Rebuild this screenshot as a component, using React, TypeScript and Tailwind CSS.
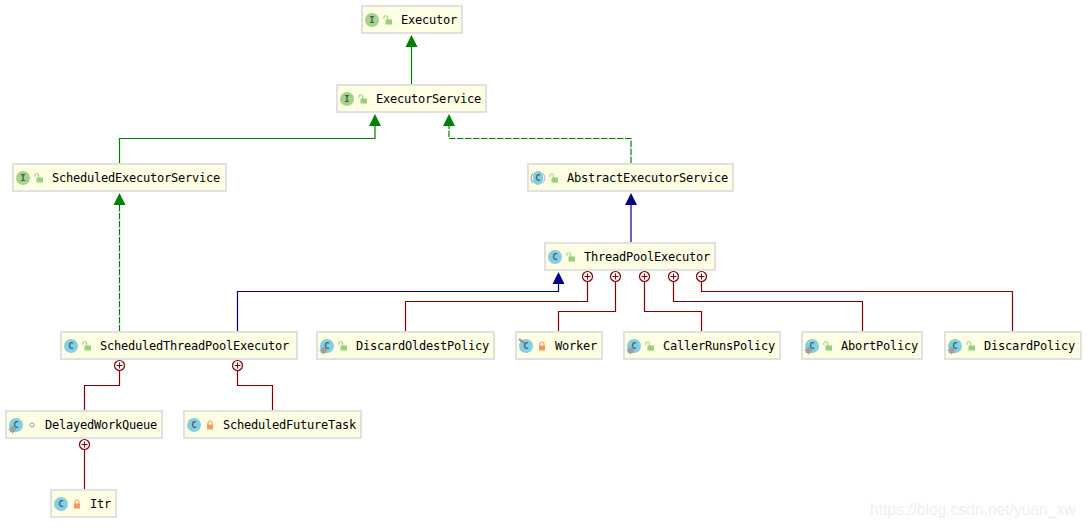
const GREEN = "#008000";
const NAVY = "#000080";
const RED = "#800000";

type Access = "open" | "closed" | "dot";
type NodeInfo = {
  name: string;
  box: string;
  kind: "I" | "C";
  access: Access;
  gear?: boolean;
  pin?: boolean;
  abstract?: boolean;
};

const nodes: NodeInfo[] = [
  { name: "Executor", box: "left-[361px] top-[5px] w-[102px]", kind: "I", access: "open" },
  { name: "ExecutorService", box: "left-[336px] top-[84px] w-[151px]", kind: "I", access: "open" },
  { name: "ScheduledExecutorService", box: "left-[12px] top-[163px] w-[215px]", kind: "I", access: "open" },
  { name: "AbstractExecutorService", box: "left-[527px] top-[163px] w-[207px]", kind: "C", access: "open", abstract: true },
  { name: "ThreadPoolExecutor", box: "left-[544px] top-[242px] w-[172px]", kind: "C", access: "open" },
  { name: "ScheduledThreadPoolExecutor", box: "left-[60px] top-[331px] w-[238px]", kind: "C", access: "open" },
  { name: "DiscardOldestPolicy", box: "left-[316px] top-[331px] w-[179px]", kind: "C", access: "open", gear: true },
  { name: "Worker", box: "left-[515px] top-[331px] w-[88px]", kind: "C", access: "closed", pin: true },
  { name: "CallerRunsPolicy", box: "left-[623px] top-[331px] w-[158px]", kind: "C", access: "open", gear: true },
  { name: "AbortPolicy", box: "left-[801px] top-[331px] w-[122px]", kind: "C", access: "open", gear: true },
  { name: "DiscardPolicy", box: "left-[944px] top-[331px] w-[138px]", kind: "C", access: "open", gear: true },
  { name: "DelayedWorkQueue", box: "left-[5px] top-[410px] w-[158px]", kind: "C", access: "dot", gear: true },
  { name: "ScheduledFutureTask", box: "left-[183px] top-[410px] w-[179px]", kind: "C", access: "closed" },
  { name: "Itr", box: "left-[50px] top-[489px] w-[67px]", kind: "C", access: "closed" },
];

const arrows: { x: number; y: number; c: string }[] = [
  { x: 411.5, y: 35, c: GREEN },
  { x: 375, y: 114, c: GREEN },
  { x: 449, y: 114, c: GREEN },
  { x: 119.5, y: 193, c: GREEN },
  { x: 631, y: 193, c: NAVY },
  { x: 558.5, y: 272, c: NAVY },
];

const lines: { d: string; c: string; dash?: string }[] = [
  { d: "M411.5 47V84", c: GREEN },
  { d: "M119.5 163V138.5H375V126", c: GREEN },
  { d: "M631 163V138.5H449V126", c: GREEN, dash: "6.5 1.5" },
  { d: "M119.5 205V331", c: GREEN, dash: "6.5 1.5" },
  { d: "M631 205V242", c: NAVY },
  { d: "M237.5 331V291.5H558.5V284", c: NAVY },
  { d: "M587.5 282V301.5H405.5V331", c: RED },
  { d: "M615.5 282V311.5H558.5V331", c: RED },
  { d: "M644.5 282V311.5H701.5V331", c: RED },
  { d: "M673.5 282V301.5H862.5V331", c: RED },
  { d: "M701.5 282V291.5H1012.5V331", c: RED },
  { d: "M119.5 371V385.5H84.5V410", c: RED },
  { d: "M237.5 371V385.5H272.5V410", c: RED },
  { d: "M84.5 450V489", c: RED },
];

const pluses: [number, number][] = [
  [587.5, 276.5], [615.5, 276.5], [644.5, 276.5], [673.5, 276.5], [701.5, 276.5],
  [119.5, 365.5], [237.5, 365.5], [84.5, 444.5],
];

function AccessIcon({ access }: { access: Access }) {
  if (access === "dot") {
    return (
      <svg width="8" height="8" viewBox="0 0 8 8" className="block">
        <circle cx="4" cy="4" r="2" fill="none" stroke="#b4bcc0" strokeWidth="1.3" />
      </svg>
    );
  }
  if (access === "closed") {
    return (
      <svg width="8" height="10" viewBox="0 0 8 10" className="block">
        <path d="M2 5V3a2 2 0 0 1 4 0v2" fill="none" stroke="#f4a26b" strokeWidth="1.2" />
        <rect x="1" y="4.5" width="6" height="5" fill="#f4995f" />
      </svg>
    );
  }
  return (
    <svg width="10" height="10" viewBox="0 0 10 10" className="block">
      <path d="M0.8 4V2.6a1.9 1.9 0 0 1 3.8 0V5" fill="none" stroke="#a3d48a" strokeWidth="1.1" />
      <rect x="2.5" y="4.5" width="6.5" height="5" fill="#97cf7d" />
    </svg>
  );
}

function Gear() {
  return (
    <svg width="9" height="9" viewBox="0 0 9 9" className="absolute left-[-1.5px] top-[6.5px]">
      <circle cx="4.5" cy="4.5" r="2.3" fill="none" stroke="#9a9fa3" strokeWidth="1.5" />
      <path d="M4.5 0.5V8.5M0.5 4.5H8.5M1.7 1.7L7.3 7.3M7.3 1.7L1.7 7.3" stroke="#9a9fa3" strokeWidth="0.9" />
    </svg>
  );
}

function Pin() {
  return (
    <svg width="7" height="7" viewBox="0 0 7 7" className="absolute left-[-1px] top-[-1px]">
      <path d="M1 1L6 5" stroke="#8c9094" strokeWidth="2.2" />
    </svg>
  );
}

function AbstractMarks() {
  return (
    <svg width="16" height="16" viewBox="0 0 16 16" className="absolute left-[-1px] top-[-1px]">
      <path d="M3 3.2A7 7 0 0 0 3 12.8" fill="none" stroke="#a8adb0" strokeWidth="1.3" />
      <path d="M13 3.2A7 7 0 0 1 13 12.8" fill="none" stroke="#c6cacc" strokeWidth="1.3" />
    </svg>
  );
}

function Node({ n }: { n: NodeInfo }) {
  const body =
    n.kind === "I"
      ? "w-[14px] rounded-full bg-[#a5d38b] text-[#4d5a45]"
      : n.abstract
        ? "w-[10px] rounded-[5px] bg-[#84cfe2] text-[#47636e]"
        : "w-[14px] rounded-full bg-[#84cfe2] text-[#47636e]";
  return (
    <div className={`absolute ${n.box} h-[29px] flex items-center border-2 border-[#e1e1e1] bg-[#ffffe4] pl-[2px] pt-[1px]`}>
      <div className="relative w-[14px] h-[14px] flex items-center justify-center shrink-0">
        <div className={`relative h-[14px] ${body} flex items-center justify-center text-[9px] font-bold leading-none font-['DejaVu_Sans_Mono',monospace]`}>
          {n.kind}
        </div>
        {n.abstract && <AbstractMarks />}
        {n.gear && <Gear />}
        {n.pin && <Pin />}
      </div>
      <div className="w-[10px] h-[10px] ml-[4px] mr-[8px] flex items-center justify-center shrink-0">
        <AccessIcon access={n.access} />
      </div>
      <span className="font-['DejaVu_Sans_Mono',monospace] text-[12px] tracking-[-0.22px] leading-none text-black whitespace-pre">
        {n.name}
      </span>
    </div>
  );
}

export default function App() {
  return (
    <div className="relative w-[1087px] h-[528px] bg-white overflow-hidden">
      <svg width="1087" height="528" className="absolute left-0 top-0">
        {lines.map((l, i) => (
          <path key={i} d={l.d} fill="none" stroke={l.c} strokeWidth="1.2" strokeDasharray={l.dash} />
        ))}
        {arrows.map((a, i) => (
          <path key={i} d={`M${a.x} ${a.y}L${a.x - 6} ${a.y + 12}H${a.x + 6}Z`} fill={a.c} />
        ))}
        {pluses.map(([x, y], i) => (
          <g key={i}>
            <circle cx={x} cy={y} r="5" fill="#fff" stroke={RED} strokeWidth="1.2" />
            <path d={`M${x - 3} ${y}H${x + 3}M${x} ${y - 3}V${y + 3}`} stroke={RED} strokeWidth="1" />
          </g>
        ))}
      </svg>
      {nodes.map((n) => (
        <Node key={n.name} n={n} />
      ))}
      <div className="absolute left-[870px] top-[500px] font-['Liberation_Sans',sans-serif] text-[15.6px] leading-[20px] text-[#efefef] whitespace-nowrap">
        https://blog.csdn.net/yuan_xw
      </div>
    </div>
  );
}
